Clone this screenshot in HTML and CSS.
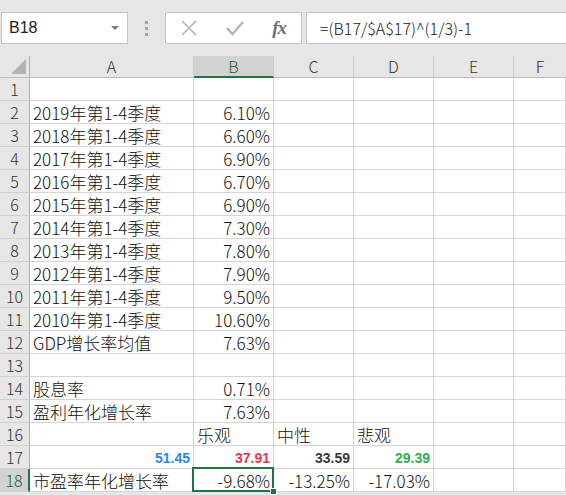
FILE: index.html
```html
<!DOCTYPE html>
<html lang="zh-CN">
<head>
<meta charset="utf-8">
<title>Sheet</title>
<link rel="stylesheet" href="styles.css">
</head>
<body>
<div class="app">
  <div class="fbar">
    <div class="namebox">
      <span class="name">B18</span>
      <span class="dd"></span>
    </div>
    <div class="grip"><i></i><i></i><i></i></div>
    <div class="btns">
      <svg class="ico" width="18" height="18" viewBox="0 0 18 18"><path d="M2 2 L16 16 M16 2 L2 16" stroke="#b3b3b3" stroke-width="1.6" fill="none"/></svg>
      <svg class="ico" width="20" height="18" viewBox="0 0 20 18"><path d="M2 9 L7.5 15 L18 3" stroke="#b3b3b3" stroke-width="2.4" fill="none"/></svg>
      <span class="fx">fx</span>
    </div>
    <div class="formula">=(B17/$A$17)^(1/3)-1</div>
  </div>
  <div class="sheet">
    <div class="ch corner"><span class="tri"></span></div>
    <div class="ch">A</div>
    <div class="ch sel">B</div>
    <div class="ch">C</div>
    <div class="ch">D</div>
    <div class="ch">E</div>
    <div class="ch last">F</div>

    <div class="rh">1</div><div class="c"></div><div class="c"></div><div class="c"></div><div class="c"></div><div class="c"></div><div class="c"></div>
    <div class="rh">2</div><div class="c">2019年第1-4季度</div><div class="c n">6.10%</div><div class="c"></div><div class="c"></div><div class="c"></div><div class="c"></div>
    <div class="rh">3</div><div class="c">2018年第1-4季度</div><div class="c n">6.60%</div><div class="c"></div><div class="c"></div><div class="c"></div><div class="c"></div>
    <div class="rh">4</div><div class="c">2017年第1-4季度</div><div class="c n">6.90%</div><div class="c"></div><div class="c"></div><div class="c"></div><div class="c"></div>
    <div class="rh">5</div><div class="c">2016年第1-4季度</div><div class="c n">6.70%</div><div class="c"></div><div class="c"></div><div class="c"></div><div class="c"></div>
    <div class="rh">6</div><div class="c">2015年第1-4季度</div><div class="c n">6.90%</div><div class="c"></div><div class="c"></div><div class="c"></div><div class="c"></div>
    <div class="rh">7</div><div class="c">2014年第1-4季度</div><div class="c n">7.30%</div><div class="c"></div><div class="c"></div><div class="c"></div><div class="c"></div>
    <div class="rh">8</div><div class="c">2013年第1-4季度</div><div class="c n">7.80%</div><div class="c"></div><div class="c"></div><div class="c"></div><div class="c"></div>
    <div class="rh">9</div><div class="c">2012年第1-4季度</div><div class="c n">7.90%</div><div class="c"></div><div class="c"></div><div class="c"></div><div class="c"></div>
    <div class="rh">10</div><div class="c">2011年第1-4季度</div><div class="c n">9.50%</div><div class="c"></div><div class="c"></div><div class="c"></div><div class="c"></div>
    <div class="rh">11</div><div class="c">2010年第1-4季度</div><div class="c n">10.60%</div><div class="c"></div><div class="c"></div><div class="c"></div><div class="c"></div>
    <div class="rh">12</div><div class="c">GDP增长率均值</div><div class="c n">7.63%</div><div class="c"></div><div class="c"></div><div class="c"></div><div class="c"></div>
    <div class="rh">13</div><div class="c"></div><div class="c"></div><div class="c"></div><div class="c"></div><div class="c"></div><div class="c"></div>
    <div class="rh">14</div><div class="c">股息率</div><div class="c n">0.71%</div><div class="c"></div><div class="c"></div><div class="c"></div><div class="c"></div>
    <div class="rh">15</div><div class="c">盈利年化增长率</div><div class="c n">7.63%</div><div class="c"></div><div class="c"></div><div class="c"></div><div class="c"></div>
    <div class="rh">16</div><div class="c"></div><div class="c">乐观</div><div class="c">中性</div><div class="c">悲观</div><div class="c"></div><div class="c"></div>
    <div class="rh">17</div><div class="c n b blue">51.45</div><div class="c n b red">37.91</div><div class="c n b dark">33.59</div><div class="c n b green">29.39</div><div class="c"></div><div class="c"></div>
    <div class="rh sel">18</div><div class="c">市盈率年化增长率</div><div class="c n active">-9.68%<span class="box"></span><span class="handle"></span></div><div class="c n">-13.25%</div><div class="c n">-17.03%</div><div class="c"></div><div class="c"></div>
  </div>
</div>
</body>
</html>
```

FILE: styles.css
```css
html, body {
  margin: 0;
  padding: 0;
}
body {
  width: 566px;
  height: 495px;
  overflow: hidden;
  background: #e6e6e6;
  font-family: "Noto Sans CJK SC", "Liberation Sans", sans-serif;
  color: #1a1a1a;
}
.app {
  width: 566px;
}
.fbar {
  display: flex;
  align-items: stretch;
  height: 32px;
  padding-top: 12px;
  padding-bottom: 12px;
}
.namebox {
  margin-left: 1px;
  width: 127px;
  box-sizing: border-box;
  border: 1px solid #c6c6c6;
  background: #fff;
  display: flex;
  align-items: center;
  justify-content: space-between;
  padding: 0 8px 0 7px;
}
.name {
  font-family: "Liberation Sans", sans-serif;
  font-size: 16px;
  color: #222;
}
.dd {
  width: 0;
  height: 0;
  border-left: 4px solid transparent;
  border-right: 4px solid transparent;
  border-top: 4px solid #777;
}
.grip {
  width: 37px;
  display: flex;
  flex-direction: column;
  align-items: center;
  justify-content: center;
  gap: 3px;
}
.grip i {
  display: block;
  width: 3px;
  height: 3px;
  background: #a6a6a6;
}
.btns {
  width: 137px;
  box-sizing: border-box;
  border: 1px solid #c6c6c6;
  background: #fff;
  display: flex;
  align-items: center;
  justify-content: space-between;
  padding: 0 15px 0 14px;
}
.fx {
  font-family: "Liberation Serif", serif;
  font-style: italic;
  font-weight: bold;
  font-size: 19px;
  color: #707070;
  letter-spacing: -1px;
}
.formula {
  margin-left: 4px;
  flex: 1;
  box-sizing: border-box;
  border: 1px solid #c6c6c6;
  border-right: none;
  background: #fff;
  display: flex;
  align-items: center;
  padding-left: 13px;
  font-size: 16px;
  font-weight: 300;
  color: #222;
}
.sheet {
  display: grid;
  grid-template-columns: 30px 164px 80px 80px 80px 80px 1fr;
  grid-template-rows: 22px;
  grid-auto-rows: 23px;
  background: #fff;
}
.ch {
  background: #e6e6e6;
  border-right: 1px solid #cfcfcf;
  border-bottom: 1px solid #bdbdbd;
  box-sizing: border-box;
  text-align: center;
  font-size: 16px;
  font-weight: 300;
  line-height: 21px;
  color: #333;
}
.ch.corner {
  position: relative;
  border-right-color: #b0b0b0;
}
.tri {
  position: absolute;
  right: 3px;
  bottom: 3px;
  width: 0;
  height: 0;
  border-left: 15px solid transparent;
  border-bottom: 15px solid #b4b4b4;
}
.ch.sel {
  background: #d2d2d2;
  border-bottom: 2px solid #217346;
  color: #1e5e3a;
}
.ch.last {
  border-right: none;
}
.rh {
  background: #e6e6e6;
  border-right: 1px solid #b0b0b0;
  border-bottom: 1px solid #d0d0d0;
  box-sizing: border-box;
  text-align: center;
  font-size: 16px;
  font-weight: 300;
  line-height: 23px;
  color: #333;
}
.rh.sel {
  background: #d2d2d2;
  border-right: 2px solid #217346;
  color: #1e5e3a;
}
.c {
  border-right: 1px solid #d4d4d4;
  border-bottom: 1px solid #d4d4d4;
  box-sizing: border-box;
  padding: 0 3px;
  font-size: 17px;
  font-weight: 300;
  line-height: 23px;
  white-space: nowrap;
  overflow: visible;
  color: #111;
}
.c.n {
  text-align: right;
}
.c.b {
  font-family: "Liberation Sans", sans-serif;
  font-weight: bold;
  font-size: 14px;
  line-height: 25px;
}
.blue { color: #2a86ef; }
.red { color: #e8364f; }
.dark { color: #3a3a3a; }
.green { color: #2fae4a; }
.active {
  position: relative;
}
.box {
  position: absolute;
  left: -2px;
  top: -2px;
  right: -1px;
  bottom: -1px;
  border: 2px solid #217346;
}
.handle {
  position: absolute;
  right: -4px;
  bottom: -4px;
  width: 5px;
  height: 5px;
  background: #217346;
  border: 1px solid #fff;
}
```
